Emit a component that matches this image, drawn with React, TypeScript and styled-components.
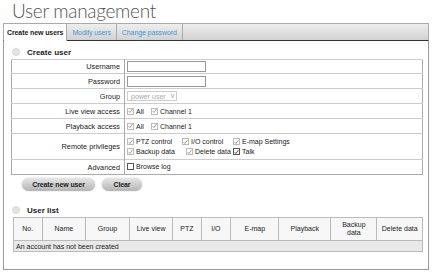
import styled, { createGlobalStyle } from "styled-components";

const Global = createGlobalStyle`
  html, body { margin: 0; padding: 0; background: #fff; }
  body { font-family: "Liberation Sans", Arial, sans-serif; color: #222; }
`;

const Page = styled.div`
  width: 432px;
  height: 273px;
  overflow: hidden;
`;

const Title = styled.h1`
  margin: 0 0 1px;
  padding-left: 12px;
  height: 22px;
  line-height: 22px;
  font-family: Lato, "Open Sans", sans-serif;
  font-weight: 300;
  font-size: 19px;
  letter-spacing: -0.3px;
  color: #555;
  white-space: nowrap;
`;

const TabBar = styled.div`
  margin: 0 3px;
  height: 16px;
  display: flex;
  border: 1px solid #aaa;
  border-bottom: 1px solid #333;
  background: linear-gradient(#eee, #d2d2d2);
`;

const Tab = styled.div<{ $active?: boolean }>`
  padding: 0 ${(p) => (p.$active ? 3 : 5)}px;
  display: flex;
  align-items: center;
  font-size: 7px;
  font-weight: ${(p) => (p.$active ? 700 : 400)};
  color: ${(p) => (p.$active ? "#222" : "#3a9ad9")};
  background: ${(p) => (p.$active ? "#fff" : "transparent")};
  border-right: 1px solid #aaa;
  margin-bottom: ${(p) => (p.$active ? "-1px" : "0")};
  letter-spacing: -0.1px;
`;

const Panel = styled.div`
  margin: 0 3px;
  height: 228px;
  border: 1px solid #999;
  border-top: none;
  padding: 0 5px 0 7px;
`;

const SectionHead = styled.div<{ $top: number }>`
  height: 14px;
  padding-top: ${(p) => p.$top}px;
  display: flex;
  align-items: center;
  gap: 7px;
  padding-left: 1px;
  font-size: 8px;
  font-weight: 700;
  color: #222;
`;

const Dot = styled.span`
  width: 6px;
  height: 6px;
  border-radius: 50%;
  background: #e4e4e4;
  border: 1px solid #d6d6d6;
`;

const Form = styled.table`
  width: 412px;
  border-collapse: collapse;
  border: 1px solid #aaa;
  font-size: 7px;
  td {
    border-top: 1px solid #ccc;
    padding: 0 4px;
  }
`;

const FormRow = styled.tr<{ $h?: number }>`
  height: ${(p) => p.$h ?? 15}px;
`;

const Label = styled.td`
  width: 104px;
  text-align: right;
  border-right: 1px solid #aaa;
  color: #1a1a1a;
  font-size: 7.3px;
`;

const Value = styled.td`
  padding-left: 2px !important;
`;

const TextBox = styled.div`
  width: 77px;
  height: 9px;
  border: 1px solid #999;
  background: #fff;
`;

const Select = styled.div`
  width: 50px;
  height: 10px;
  border: 1px solid #ccc;
  color: #aaa;
  font-size: 7px;
  display: flex;
  align-items: center;
  padding-left: 3px;
  box-sizing: border-box;
  gap: 4px;
  white-space: nowrap;
`;

const Checks = styled.div`
  display: flex;
  align-items: center;
  white-space: nowrap;
`;

const CheckLines = styled.div`
  display: flex;
  flex-direction: column;
  gap: 3px;
`;

const Check = styled.span<{ $w?: number }>`
  display: inline-flex;
  align-items: center;
  gap: 2px;
  width: ${(p) => (p.$w ? `${p.$w}px` : "auto")};
  color: #222;
  white-space: nowrap;
`;

const Box = styled.span<{ $on?: boolean; $dark?: boolean }>`
  width: 7px;
  height: 7px;
  box-sizing: border-box;
  border: 1px solid ${(p) => (p.$dark ? "#555" : "#bbb")};
  background: #fff;
  display: inline-flex;
  align-items: center;
  justify-content: center;
  svg { display: ${(p) => (p.$on ? "block" : "none")}; }
`;

const Buttons = styled.div`
  display: flex;
  gap: 7px;
  padding: 3px 0 0 11px;
`;

const PillButton = styled.div<{ $w: number }>`
  width: ${(p) => p.$w}px;
  height: 13px;
  border-radius: 7px;
  background: linear-gradient(#e6e6e6, #b4b4b4);
  box-shadow: 0 0 1px #888;
  font-size: 7px;
  font-weight: 700;
  color: #222;
  display: flex;
  align-items: center;
  justify-content: center;
  letter-spacing: -0.1px;
`;

const ListTable = styled.table`
  margin-left: 2px;
  width: 410px;
  border-collapse: collapse;
  font-size: 7px;
  border: 1px solid #bbb;
  th {
    font-weight: 400;
    background: #f7f7f7;
    border-right: 1px solid #bbb;
    height: 22px;
    padding: 0 2px;
    line-height: 8px;
    text-align: center;
  }
  th:last-child { border-right: none; }
  td {
    background: #e9e9e9;
    border-top: 1px solid #bbb;
    height: 10px;
    padding: 0 2px;
  }
`;

const Tick = ({ dark }: { dark?: boolean }) => (
  <svg width="6" height="6" viewBox="0 0 6 6">
    <path d="M0.8 3.2 L2.3 4.8 L5.3 0.8" fill="none" stroke={dark ? "#333" : "#888"} strokeWidth="1" />
  </svg>
);

function CheckItem({ label, on = true, dark, w }: { label: string; on?: boolean; dark?: boolean; w?: number }) {
  return (
    <Check $w={w}>
      <Box $on={on} $dark={dark || !on}>
        <Tick dark={dark} />
      </Box>
      {label}
    </Check>
  );
}

const columns: { name: string; w: number }[] = [
  { name: "No.", w: 27 },
  { name: "Name", w: 44 },
  { name: "Group", w: 44 },
  { name: "Live view", w: 45 },
  { name: "PTZ", w: 26 },
  { name: "I/O", w: 29 },
  { name: "E-map", w: 51 },
  { name: "Playback", w: 52 },
  { name: "Backup data", w: 46 },
  { name: "Delete data", w: 46 },
];

export default function App() {
  return (
    <Page>
      <Global />
      <Title>User management</Title>
      <TabBar>
        <Tab $active>Create new users</Tab>
        <Tab>Modify users</Tab>
        <Tab>Change password</Tab>
      </TabBar>
      <Panel>
        <SectionHead $top={4}>
          <Dot />
          Create user
        </SectionHead>
        <Form>
          <tbody>
            <FormRow $h={14}>
              <Label>Username</Label>
              <Value><TextBox /></Value>
            </FormRow>
            <FormRow>
              <Label>Password</Label>
              <Value><TextBox /></Value>
            </FormRow>
            <FormRow>
              <Label>Group</Label>
              <Value>
                <Select>power user <span>∨</span></Select>
              </Value>
            </FormRow>
            <FormRow>
              <Label>Live view access</Label>
              <Value>
                <Checks>
                  <CheckItem label="All" w={24} />
                  <CheckItem label="Channel 1" />
                </Checks>
              </Value>
            </FormRow>
            <FormRow>
              <Label>Playback access</Label>
              <Value>
                <Checks>
                  <CheckItem label="All" w={24} />
                  <CheckItem label="Channel 1" />
                </Checks>
              </Value>
            </FormRow>
            <FormRow $h={26}>
              <Label>Remote privileges</Label>
              <Value>
                <CheckLines>
                  <Checks>
                    <CheckItem label="PTZ control" w={55} />
                    <CheckItem label="I/O control" w={51} />
                    <CheckItem label="E-map Settings" />
                  </Checks>
                  <Checks>
                    <CheckItem label="Backup data" w={59} />
                    <CheckItem label="Delete data" w={47} />
                    <CheckItem label="Talk" dark />
                  </Checks>
                </CheckLines>
              </Value>
            </FormRow>
            <FormRow>
              <Label>Advanced</Label>
              <Value>
                <CheckItem label="Browse log" on={false} />
              </Value>
            </FormRow>
          </tbody>
        </Form>
        <Buttons>
          <PillButton $w={73}>Create new user</PillButton>
          <PillButton $w={40}>Clear</PillButton>
        </Buttons>
        <SectionHead $top={12}>
          <Dot />
          User list
        </SectionHead>
        <ListTable>
          <thead>
            <tr>
              {columns.map((c) => (
                <th key={c.name} style={{ width: c.w }}>
                  {c.name === "Backup data" ? (<>Backup<br />data</>) : c.name}
                </th>
              ))}
            </tr>
          </thead>
          <tbody>
            <tr>
              <td colSpan={10}>An account has not been created</td>
            </tr>
          </tbody>
        </ListTable>
      </Panel>
    </Page>
  );
}
